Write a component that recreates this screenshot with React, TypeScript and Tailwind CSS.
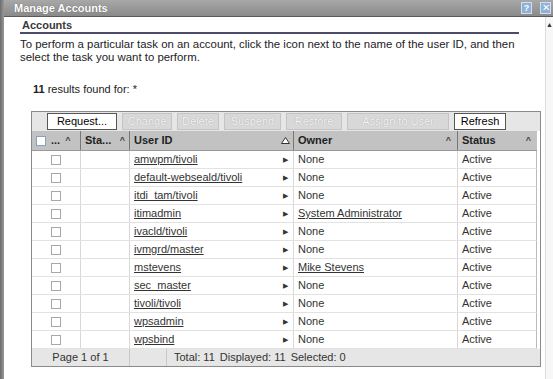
import React from "react";

const rows = [
  { id: "amwpm/tivoli", owner: "None", link: false },
  { id: "default-webseald/tivoli", owner: "None", link: false },
  { id: "itdi_tam/tivoli", owner: "None", link: false },
  { id: "itimadmin", owner: "System Administrator", link: true },
  { id: "ivacld/tivoli", owner: "None", link: false },
  { id: "ivmgrd/master", owner: "None", link: false },
  { id: "mstevens", owner: "Mike Stevens", link: true },
  { id: "sec_master", owner: "None", link: false },
  { id: "tivoli/tivoli", owner: "None", link: false },
  { id: "wpsadmin", owner: "None", link: false },
  { id: "wpsbind", owner: "None", link: false },
];

const cols = "grid grid-cols-[49px_49px_164px_164px_1fr]";

const Caret = () => <span className="text-[9px] text-[#444] leading-none">^</span>;

const ToolButton = ({ label, w, on }: { label: string; w: string; on?: boolean }) => (
  <div
    className={`${w} h-[17px] flex items-center justify-center text-[11px] leading-none ${
      on
        ? "bg-white border border-[#555] text-black"
        : "bg-[#d8d8d8] border border-[#c4c4c4] text-[#f4f4f4] [text-shadow:0_0_1px_#999]"
    }`}
  >
    {label}
  </div>
);

export default function App() {
  return (
    <div className="w-[553px] h-[379px] bg-white flex overflow-hidden font-['Liberation_Sans',Arial,sans-serif] text-[11px] leading-[13px] text-[#222]">
      <div className="w-[4px] h-full bg-gradient-to-r from-[#6b6b6b] to-[#9a9a9a]" />
      <div className="flex-1 flex flex-col">
        {/* title bar */}
        <div className="h-[17px] shrink-0 flex items-center justify-between bg-gradient-to-b from-[#a8a8a8] to-[#8a8a8a] border-b border-[#5a5a5a] pl-[10px] pr-[2px]">
          <span className="text-white font-bold text-[11px] [text-shadow:0_0_1px_#555]">Manage Accounts</span>
          <div className="flex gap-[8px]">
            <div className="w-[11px] h-[12px] bg-[#8fb0d8] border border-[#d0e0f0] flex items-center justify-center text-white text-[9px] font-bold leading-none">?</div>
            <div className="w-[11px] h-[12px] bg-[#8fb0d8] border border-[#d0e0f0] flex items-center justify-center text-white text-[10px] leading-none">✕</div>
          </div>
        </div>
        <div className="flex-1 flex">
          <div className="flex-1 pl-[16px] pt-[2px]">
            <div className="w-[499px] border-b-2 border-[#4b4d68] pl-[2px] font-bold text-[11px] leading-[13px] text-[#3a3a3a]">Accounts</div>
            <p className="mt-[4px] text-[11.4px] leading-[13px] text-[#222]">
              To perform a particular task on an account, click the icon next to the name of the user ID, and then
              <br />
              select the task you want to perform.
            </p>
            <div className="mt-[19px] ml-[13px] text-[11px] leading-[13px]">
              <b>11</b> results found for: *
            </div>
            <div className="mt-[15px] ml-[11px] w-[510px] border border-[#8a8a8a]">
              {/* toolbar */}
              <div className="h-[19px] bg-[#e6e6e6] flex items-center pl-[15px] gap-[5px]">
                <ToolButton label="Request..." w="w-[70px]" on />
                <ToolButton label="Change" w="w-[50px]" />
                <ToolButton label="Delete" w="w-[42px]" />
                <ToolButton label="Suspend" w="w-[57px]" />
                <ToolButton label="Restore" w="w-[56px]" />
                <ToolButton label="Assign to User" w="w-[102px]" />
                <ToolButton label="Refresh" w="w-[52px]" on />
              </div>
              {/* header */}
              <div className={`${cols} h-[20px] bg-[#c2c2c2] font-bold text-[11px] text-[#222] border-b border-[#999] mr-[3px]`}>
                <div className="flex items-center pl-[4px] gap-[5px] border-r border-[#777]">
                  <div className="w-[10px] h-[10px] bg-white border border-[#8aa0c0]" />
                  <span>...</span>
                  <Caret />
                </div>
                <div className="flex items-center justify-between px-[4px] border-r border-[#777]">
                  <span>Sta...</span>
                  <Caret />
                </div>
                <div className="flex items-center justify-between pl-[4px] pr-[3px] border-r border-[#777]">
                  <span>User ID</span>
                  <svg width="9" height="7" viewBox="0 0 9 7">
                    <path d="M4.5 0.5 L8.5 6.5 L0.5 6.5 Z" fill="#fff" stroke="#333" strokeWidth="1" />
                  </svg>
                </div>
                <div className="flex items-center justify-between pl-[4px] pr-[6px] border-r border-[#777]">
                  <span>Owner</span>
                  <Caret />
                </div>
                <div className="flex items-center justify-between pl-[4px] pr-[6px]">
                  <span>Status</span>
                  <Caret />
                </div>
              </div>
              {/* rows */}
              {rows.map((r) => (
                <div key={r.id} className={`${cols} h-[18px] border-b border-[#e2e2e2] text-[11px] mr-[3px] border-r border-r-[#bbb]`}>
                  <div className="flex items-center pl-[19px] border-r border-[#d8d8d8]">
                    <div className="w-[10px] h-[10px] border border-[#a8a8a8] bg-white" />
                  </div>
                  <div className="border-r border-[#d8d8d8]" />
                  <div className="flex items-center justify-between pl-[4px] pr-[5px] border-r border-[#d8d8d8]">
                    <span className="underline text-[#333]">{r.id}</span>
                    <span className="text-[7px] text-[#333]">▶</span>
                  </div>
                  <div className="flex items-center pl-[4px] border-r border-[#d8d8d8]">
                    <span className={r.link ? "underline text-[#333]" : "text-[#333]"}>{r.owner}</span>
                  </div>
                  <div className="flex items-center pl-[4px] text-[#333]">Active</div>
                </div>
              ))}
              {/* footer */}
              <div className="h-[17px] bg-[#e6e6e6] flex text-[11px] text-[#333]">
                <div className="w-[98px] flex items-center justify-center border-r border-[#c8c8c8]">Page 1 of 1</div>
                <div className="w-[37px] border-r border-[#c8c8c8]" />
                <div className="flex items-center pl-[7px] gap-[5px]">
                  <span>Total: 11</span>
                  <span>Displayed: 11</span>
                  <span>Selected: 0</span>
                </div>
              </div>
            </div>
          </div>
          {/* scrollbar */}
          <div className="w-[8px] flex flex-col items-center border-l border-[#ddd] bg-[#f7f7f7]">
            <span className="text-[7px] leading-none mt-[4px] text-[#333]">▲</span>
          </div>
        </div>
      </div>
    </div>
  );
}
